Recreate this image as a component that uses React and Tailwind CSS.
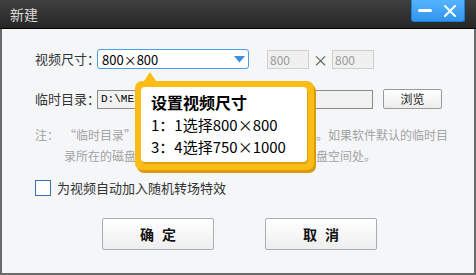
import React from 'react'

const cjk = { fontFamily: '"Noto Sans CJK SC", "Noto Sans", sans-serif' }

const App = () => {
  return (
    <div className="relative w-[476px] h-[275px] flex flex-col overflow-hidden" style={cjk}>
      {/* Title bar */}
      <div className="h-[29px] shrink-0 flex items-start justify-between bg-gradient-to-b from-[#404040] to-[#262626] border-b border-black">
        <span className="ml-[10px] mt-[4px] text-[14px] leading-[20px] text-[#d9d9d9]">新建</span>
        <div className="mr-[11px] w-[54px] h-[22px] flex items-center justify-between px-[6px] rounded-b-[3px] bg-gradient-to-b from-[#55b4ff] to-[#2f95ee] border border-[#1f7fd4] border-t-0">
          <div className="w-[14px] h-[3px] rounded-full bg-white" />
          <svg width="12" height="12" viewBox="0 0 12 12" className="mr-[2px]">
            <path d="M1 1 L11 11 M11 1 L1 11" stroke="white" strokeWidth="2" strokeLinecap="round" />
          </svg>
        </div>
      </div>

      {/* Body */}
      <div className="flex-1 bg-[#f5f6f8] border-l-2 border-r-2 border-b-2 border-[#6a6a6a] pl-[33px] pt-[20px] flex flex-col">
        {/* Size row */}
        <div className="flex items-center h-[20px]">
          <span className="w-[62px] shrink-0 whitespace-nowrap text-[13px] text-[#333]">视频尺寸：</span>
          <div className="w-[152px] h-[20px] shrink-0 flex items-center justify-between bg-white border border-[#4a9be8] rounded-[3px] pl-[4px] pr-[3px]">
            <span className="text-[13px] text-black leading-none">800×800</span>
            <svg width="11" height="7" viewBox="0 0 11 7">
              <path d="M0 0 H11 L5.5 6.5 Z" fill="#3d8fe0" />
            </svg>
          </div>
          <div className="ml-[18px] w-[42px] h-[19px] bg-[#f0f0f0] border border-[#cfcfcf] text-[12px] text-[#9a9a9a] leading-[17px] pl-[2px]">800</div>
          <span className="w-[23px] text-center text-[15px] text-[#555] leading-none">×</span>
          <div className="w-[42px] h-[19px] bg-[#f0f0f0] border border-[#cfcfcf] text-[12px] text-[#9a9a9a] leading-[17px] pl-[2px]">800</div>
        </div>

        {/* Temp dir row */}
        <div className="flex items-center h-[20px] mt-[20px]">
          <span className="w-[62px] shrink-0 whitespace-nowrap text-[13px] text-[#333]">临时目录：</span>
          <div className="w-[276px] h-[19px] shrink-0 bg-[#f2f2f2] border border-[#8a8a8a] pl-[3px] text-[11px] leading-[17px] text-black" style={{ fontFamily: '"Liberation Mono", monospace' }}>
            D:\ME2
          </div>
          <button className="ml-[10px] w-[59px] h-[20px] border border-[#9a9a9a] rounded-[2px] bg-gradient-to-b from-white to-[#ececec] text-[12px] text-[#1a1a1a] leading-none">浏览</button>
        </div>

        {/* Note */}
        <div className="flex mt-[15px] text-[12px] leading-[21px] text-[#a3a3a3]">
          <span className="w-[29px] shrink-0">注：</span>
          <p className="w-[384px]">
            “临时目录”指视频合成时临时文件的存放位置。如果软件默认的临时目录所在的磁盘空间不足，请修改到空间较大的磁盘空间处。
          </p>
        </div>

        {/* Checkbox */}
        <label className="flex items-center mt-[14px] h-[16px]">
          <span className="w-[16px] h-[16px] bg-white border border-[#3b6fb0]" />
          <span className="ml-[6px] text-[13px] text-[#333]">为视频自动加入随机转场特效</span>
        </label>

        {/* Buttons */}
        <div className="flex mt-[22px] ml-[67px] gap-[51px]">
          <button className="w-[112px] h-[32px] border border-[#adadad] rounded-[2px] bg-gradient-to-b from-white to-[#eeeeee] text-[14px] font-bold text-[#111] tracking-[8px] pl-[8px]">确定</button>
          <button className="w-[112px] h-[32px] border border-[#adadad] rounded-[2px] bg-gradient-to-b from-white to-[#eeeeee] text-[14px] font-bold text-[#111] tracking-[8px] pl-[8px]">取消</button>
        </div>
      </div>

      {/* Tooltip overlay */}
      <div className="absolute left-[135px] top-[72px]">
        <svg width="12" height="9" viewBox="0 0 12 9" className="ml-[9px]">
          <path d="M0 9 L6 0 L12 9 Z" fill="#fbbd15" />
        </svg>
        <div className="w-[179px] h-[89px] rounded-[7px] bg-[#fbbd15] p-[6px] pr-[7px] pb-[8px] shadow-[2px_3px_0_#d99c0c]">
          <div className="w-full h-full rounded-[4px] bg-white shadow-[1px_2px_0_#e0a20e] pl-[10px] pt-[4px] text-black">
            <div className="text-[16px] font-bold leading-[22px]">设置视频尺寸</div>
            <div className="text-[15px] leading-[23px]">1：1选择800×800</div>
            <div className="text-[15px] leading-[22px]">3：4选择750×1000</div>
          </div>
        </div>
      </div>
    </div>
  )
}

export default App
